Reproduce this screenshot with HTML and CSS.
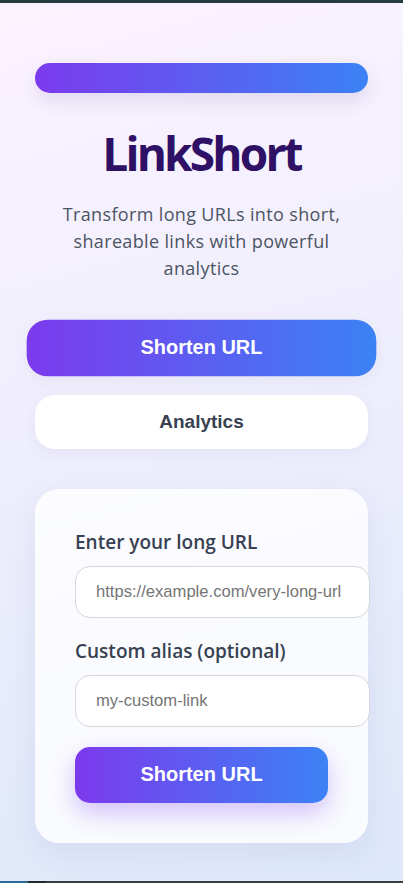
FILE: index.html
```html
<!DOCTYPE html>
<html lang="en">
<head>
<meta charset="utf-8">
<title>LinkShort</title>
<link rel="stylesheet" href="styles.css">
</head>
<body>
<div class="topbar"></div>
<main class="app">
  <div class="pill"></div>
  <h1 class="title">LinkShort</h1>
  <p class="subtitle">Transform long URLs into short, shareable links with powerful analytics</p>
  <nav class="tabs">
    <button class="tab tab-active">Shorten URL</button>
    <button class="tab">Analytics</button>
  </nav>
  <section class="card">
    <div class="field">
      <label class="label" for="url">Enter your long URL</label>
      <input class="input" id="url" type="text" placeholder="https://example.com/very-long-url">
    </div>
    <div class="field">
      <label class="label" for="alias">Custom alias (optional)</label>
      <input class="input" id="alias" type="text" placeholder="my-custom-link">
    </div>
    <button class="submit">Shorten URL</button>
  </section>
</main>
<div class="bottombar"><span class="seg-a"></span><span class="seg-b"></span><span class="seg-c"></span></div>
</body>
</html>
```
FILE: styles.css
```css
* { box-sizing: border-box; }
html, body { margin: 0; padding: 0; }
body {
  font-family: "Open Sans", "Noto Sans", sans-serif;
  background: linear-gradient(165deg, #fcf3ff 0%, #efeefc 45%, #dde8fa 100%);
  min-height: 883px;
}
.topbar { height: 3px; background: #253b3e; }
.app {
  padding: 60px 35px 38px;
  display: flex;
  flex-direction: column;
}
.pill {
  height: 30px;
  border-radius: 15px;
  background: linear-gradient(90deg, #7c3aed, #3b82f6);
  box-shadow: 0 8px 20px rgba(60, 40, 120, 0.12);
}
.title {
  margin: 32px 0 18px;
  font-size: 46px;
  line-height: 57.6px;
  font-weight: 700;
  letter-spacing: -2.8px;
  text-align: center;
  color: #2e1065;
}
.subtitle {
  margin: 0 0 39px;
  font-size: 18px;
  line-height: 27px;
  letter-spacing: 0.35px;
  text-align: center;
  color: #4b5563;
  padding: 0 15px;
}
.tabs {
  display: flex;
  flex-direction: column;
  gap: 20px;
}
.tab {
  height: 54px;
  border: none;
  border-radius: 20px;
  background: #fff;
  font-family: "Liberation Sans", Arial, sans-serif;
  font-weight: 700;
  font-size: 19px;
  color: #374151;
  box-shadow: 0 4px 15px rgba(60, 60, 140, 0.06);
}
.tab-active {
  transform: scale(1.05);
  color: #fff;
  background: linear-gradient(90deg, #7c3aed, #3b82f6);
}
.card {
  margin-top: 40px;
  padding: 40px;
  border-radius: 24px;
  background: rgba(255, 255, 255, 0.8);
  box-shadow: 0 10px 30px rgba(60, 60, 140, 0.08);
}
.field {
  display: flex;
  flex-direction: column;
  margin-bottom: 20px;
}
.label {
  font-size: 19px;
  line-height: 27px;
  font-weight: 600;
  color: #374151;
  margin-bottom: 10px;
}
.input {
  box-sizing: content-box;
  width: 100%;
  padding: 16px 20px;
  border: 1px solid #d4d6dd;
  border-radius: 15px;
  background: #fff;
  font-family: "Liberation Sans", Arial, sans-serif;
  font-size: 16.6px;
  line-height: 18px;
  height: 18px;
  outline: none;
}
.input::placeholder { color: #757575; }
.submit {
  width: 100%;
  height: 56px;
  border: none;
  border-radius: 15px;
  background: linear-gradient(90deg, #7c3aed, #3b82f6);
  color: #fff;
  font-family: "Liberation Sans", Arial, sans-serif;
  font-weight: 700;
  font-size: 20px;
  box-shadow: 0 10px 25px rgba(124, 58, 237, 0.3);
}
.bottombar { display: flex; height: 2px; }
.seg-a { width: 28px; background: #2c6a95; }
.seg-b { width: 18px; background: #1e2a30; }
.seg-c { flex: 1; background: #3b3f42; }
```
